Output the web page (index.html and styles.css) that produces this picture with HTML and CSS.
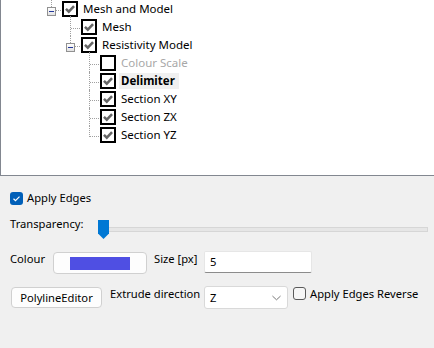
FILE: index.html
```html
<!DOCTYPE html>
<html>
<head>
<meta charset="utf-8">
<link rel="stylesheet" href="styles.css">
</head>
<body>
<div class="tree">
  <div class="row lvl0">
    <div class="conn up notlast"><span class="exp"></span></div>
    <span class="cb"><svg viewBox="0 0 16 16"><path d="M2.6 7.8 L6.4 11.6 L13.4 4.2"/></svg></span>
    <span class="lbl">Mesh and Model</span>
  </div>
  <div class="row lvl1">
    <div class="conn first"></div>
    <span class="cb"><svg viewBox="0 0 16 16"><path d="M2.6 7.8 L6.4 11.6 L13.4 4.2"/></svg></span>
    <span class="lbl">Mesh</span>
  </div>
  <div class="row lvl1">
    <div class="conn last"><span class="exp"></span></div>
    <span class="cb"><svg viewBox="0 0 16 16"><path d="M2.6 7.8 L6.4 11.6 L13.4 4.2"/></svg></span>
    <span class="lbl">Resistivity Model</span>
  </div>
  <div class="row lvl2">
    <div class="conn first"></div>
    <span class="cb"></span>
    <span class="lbl dim">Colour Scale</span>
  </div>
  <div class="row lvl2">
    <div class="conn"></div>
    <span class="cb"><svg viewBox="0 0 16 16"><path d="M2.6 7.8 L6.4 11.6 L13.4 4.2"/></svg></span>
    <span class="lbl sel">Delimiter</span>
  </div>
  <div class="row lvl2">
    <div class="conn"></div>
    <span class="cb"><svg viewBox="0 0 16 16"><path d="M2.6 7.8 L6.4 11.6 L13.4 4.2"/></svg></span>
    <span class="lbl">Section XY</span>
  </div>
  <div class="row lvl2">
    <div class="conn"></div>
    <span class="cb"><svg viewBox="0 0 16 16"><path d="M2.6 7.8 L6.4 11.6 L13.4 4.2"/></svg></span>
    <span class="lbl">Section ZX</span>
  </div>
  <div class="row lvl2">
    <div class="conn last"></div>
    <span class="cb"><svg viewBox="0 0 16 16"><path d="M2.6 7.8 L6.4 11.6 L13.4 4.2"/></svg></span>
    <span class="lbl">Section YZ</span>
  </div>
</div>
<div class="panel">
  <div class="prow apply">
    <span class="bcheck"><svg viewBox="0 0 13 13"><path d="M3.5 6.7 L5.5 8.6 L9.5 4.6"/></svg></span>
    <span class="txt">Apply Edges</span>
  </div>
  <div class="prow trans">
    <span class="txt w-trans">Transparency:</span>
    <div class="slider">
      <div class="track"></div>
      <svg class="thumb" viewBox="0 0 11 19"><path d="M0 0 H11 V13.5 L5.5 19 L0 13.5 Z"/></svg>
    </div>
  </div>
  <div class="prow colour">
    <span class="txt w-colour">Colour</span>
    <div class="cbtn"><span class="swatch"></span></div>
    <span class="txt w-size">Size [px]</span>
    <div class="input">5</div>
  </div>
  <div class="prow poly">
    <div class="btn">PolylineEditor</div>
    <span class="txt w-extr">Extrude direction</span>
    <div class="combo"><span>Z</span><svg viewBox="0 0 10 6"><path d="M0.5 0.8 L5 5 L9.5 0.8"/></svg></div>
    <span class="ucheck"></span>
    <span class="txt">Apply Edges Reverse</span>
  </div>
</div>
</body>
</html>
```
FILE: styles.css
```css
* { box-sizing: border-box; }
html, body { margin: 0; padding: 0; }
body {
  width: 434px;
  height: 348px;
  overflow: hidden;
  background: #f0f0f0;
  font-family: "Noto Sans", "Liberation Sans", sans-serif;
  font-size: 11.2px;
  color: #000;
}
.tree {
  height: 176px;
  background: #fff;
  border-left: 1px solid #828790;
  border-bottom: 1px solid #828790;
  padding-left: 41px;
  font-size: 11.5px;
}
.row {
  height: 18px;
  display: flex;
  align-items: center;
}
.lvl1 { padding-left: 19px; }
.lvl2 { padding-left: 38px; }
.conn {
  position: relative;
  width: 19px;
  height: 18px;
  flex: none;
}
.conn::before {
  content: "";
  position: absolute;
  left: 9px;
  top: 0;
  bottom: 0;
  border-left: 1px dotted #a0a0a0;
}
.conn.first::before { top: -2px; }
.conn.last::before { bottom: 7px; }
.conn.up::before { bottom: 11px; }
.conn::after {
  content: "";
  position: absolute;
  left: 10px;
  right: 0;
  top: 10px;
  border-top: 1px dotted #a0a0a0;
}
.exp {
  position: absolute;
  left: 5px;
  top: 7px;
  width: 9px;
  height: 9px;
  border: 1px solid #919191;
  background: linear-gradient(#ffffff, #e2e2e2);
  z-index: 1;
}
.exp::after {
  content: "";
  position: absolute;
  left: 1px;
  top: 3px;
  width: 5px;
  height: 1px;
  background: #23379a;
}
.cb {
  width: 16px;
  height: 16px;
  border: 2px solid #000;
  background: #fff;
  margin-left: 1px;
  flex: none;
  display: flex;
  align-items: center;
  justify-content: center;
}
.cb svg { width: 12px; height: 12px; }
.cb path {
  fill: none;
  stroke: #666;
  stroke-width: 3.4;
  stroke-linecap: butt;
  stroke-linejoin: miter;
}
.lbl {
  margin-left: 3px;
  padding: 0 2px;
  line-height: 16px;
  white-space: nowrap;
}
.lbl.dim { color: #a8a8a8; }
.lbl.sel { font-weight: bold; background: #f0f0f0; padding-right: 4px; }

.panel { padding: 14px 0 0 10px; }
.prow { display: flex; align-items: flex-start; }
.txt { line-height: 16px; white-space: nowrap; }
.apply { align-items: center; height: 16px; }
.bcheck {
  width: 13px;
  height: 13px;
  border-radius: 3px;
  background: #005fb8;
  margin-right: 4px;
  display: flex;
}
.bcheck svg { width: 13px; height: 13px; }
.bcheck path { fill: none; stroke: #fff; stroke-width: 1.2; }
.trans { margin-top: 8px; height: 26px; padding-top: 2px; }
.w-trans { width: 88px; flex: none; }
.slider {
  position: relative;
  margin-top: 4px;
  width: 330px;
  height: 20px;
}
.track {
  margin: 7px 0 0 2px;
  height: 5px;
  border: 1px solid #d6d6d6;
  background: #e6e6e6;
}
.thumb {
  position: absolute;
  left: 0;
  top: 0;
  width: 11px;
  height: 19px;
}
.thumb path { fill: #0078d4; }
.colour { margin-top: 11px; height: 23px; }
.w-colour { width: 43px; flex: none; }
.cbtn {
  margin-top: 1px;
  width: 94px;
  height: 22px;
  background: #fdfdfd;
  border: 1px solid #d0d0d0;
  border-radius: 4px;
  padding: 4px 0 0 16px;
  flex: none;
}
.swatch { display: block; width: 60px; height: 13px; background: #4f4fe3; }
.w-size { margin-left: 7px; width: 50px; flex: none; }
.input {
  width: 108px;
  height: 22px;
  background: #fff;
  border: 1px solid #e6e6e6;
  border-bottom-color: #8c8c8c;
  border-radius: 2px;
  padding: 2px 0 0 5px;
  line-height: 16px;
  flex: none;
}
.poly { margin-top: 12px; height: 24px; }
.btn {
  margin-left: 1px;
  margin-top: 1px;
  width: 91px;
  height: 21px;
  background: #fdfdfd;
  border: 1px solid #d0d0d0;
  border-radius: 4px;
  text-align: center;
  line-height: 19px;
  flex: none;
}
.w-extr { margin-left: 8px; width: 94px; flex: none; }
.combo {
  width: 84px;
  height: 23px;
  background: #fff;
  border: 1px solid #d9d9d9;
  border-radius: 3px;
  display: flex;
  align-items: center;
  justify-content: space-between;
  padding: 0 6px 0 5px;
  flex: none;
}
.combo svg { width: 9px; height: 6px; }
.combo path { fill: none; stroke: #6a6a6a; stroke-width: 1; }
.ucheck {
  margin: 1px 4px 0 5px;
  width: 13px;
  height: 13px;
  border: 1px solid #5a5a5a;
  border-radius: 3px;
  background: #f6f6f6;
  flex: none;
}
```
